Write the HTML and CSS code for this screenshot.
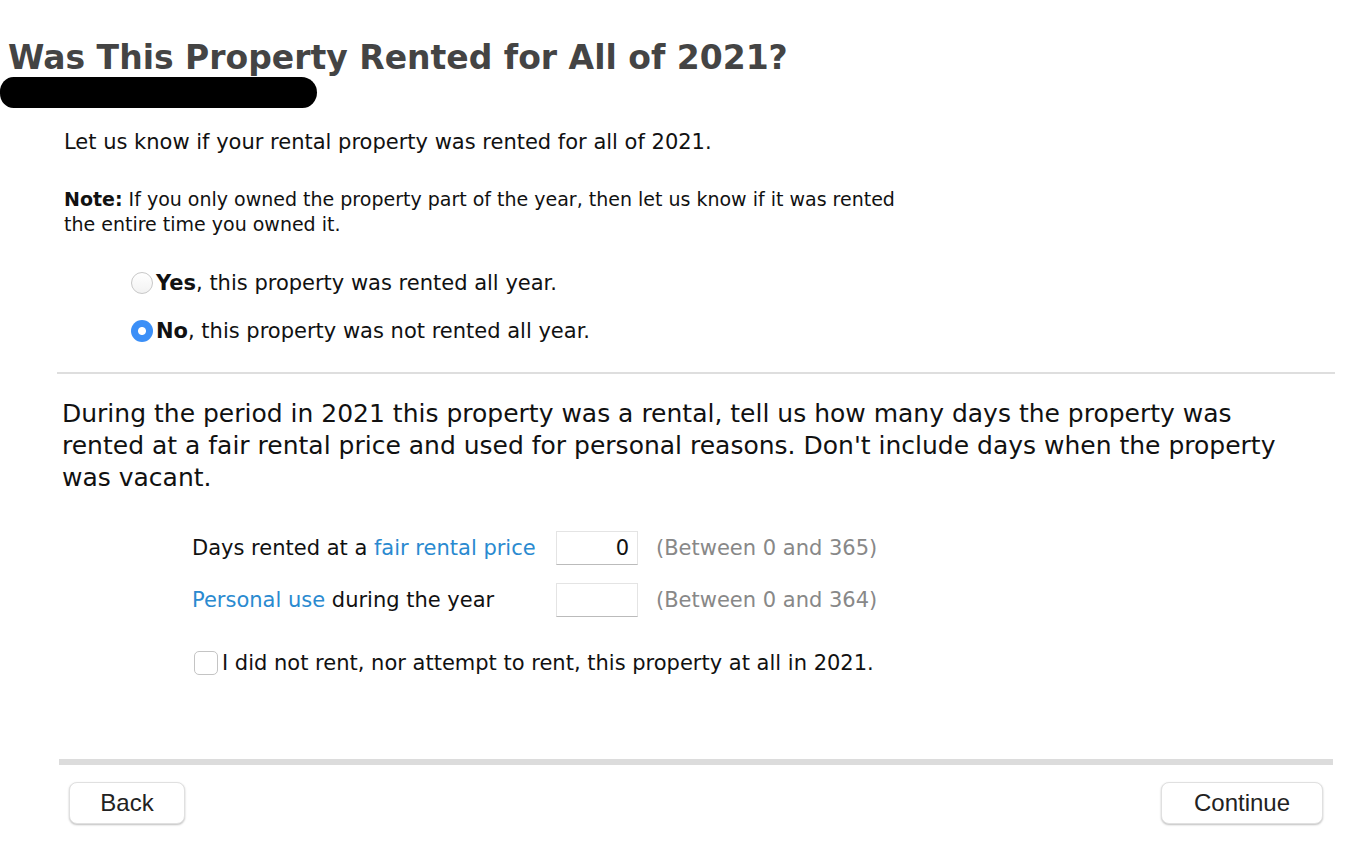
FILE: index.html
```html
<!DOCTYPE html>
<html>
<head>
<meta charset="utf-8">
<link rel="stylesheet" href="styles.css">
</head>
<body>
<div class="page">
  <header class="head">
    <h1 class="title">Was This Property Rented for All of 2021?</h1>
    <div class="redact"></div>
  </header>
  <section class="intro">
    <p class="lead">Let us know if your rental property was rented for all of 2021.</p>
    <p class="note"><b>Note:</b> If you only owned the property part of the year, then let us know if it was rented<br>the entire time you owned it.</p>
    <div class="radios">
      <label class="radio"><span class="rb"></span><span><b>Yes</b>, this property was rented all year.</span></label>
      <label class="radio"><span class="rb on"></span><span><b>No</b>, this property was not rented all year.</span></label>
    </div>
  </section>
  <hr class="sep">
  <p class="question">During the period in 2021 this property was a rental, tell us how many days the property was rented at a fair rental price and used for personal reasons. Don't include days when the property was vacant.</p>
  <div class="fields">
    <div class="row">
      <span class="lbl">Days rented at a <span class="link">fair rental price</span></span>
      <span class="inp">0</span>
      <span class="hint">(Between 0 and 365)</span>
    </div>
    <div class="row">
      <span class="lbl"><span class="link">Personal use</span> during the year</span>
      <span class="inp"></span>
      <span class="hint">(Between 0 and 364)</span>
    </div>
    <label class="check"><span class="cb"></span><span>I did not rent, nor attempt to rent, this property at all in 2021.</span></label>
  </div>
  <div class="bar"></div>
  <div class="buttons">
    <button class="btn back">Back</button>
    <button class="btn cont">Continue</button>
  </div>
</div>
</body>
</html>
```
FILE: styles.css
```css
html, body { margin: 0; padding: 0; background: #fff; }
body { font-family: "DejaVu Sans", "Noto Sans", sans-serif; color: #111; width: 1364px; height: 866px; overflow: hidden; }
.head { position: relative; height: 128px; }
.title { margin: 0; padding: 36px 0 0 8px; font-size: 33px; font-weight: bold; color: #444; line-height: 44px; }
.redact { position: absolute; left: 0; top: 77px; width: 317px; height: 31px; background: #000; border-radius: 14px 16px 15px 14px / 15px 16px 16px 15px; }
.intro { padding-left: 64px; }
.lead { margin: 0; font-size: 21px; line-height: 28px; }
.note { margin: 31px 0 0; font-size: 19px; line-height: 25px; }
.radios { padding: 32px 0 0 67px; display: flex; flex-direction: column; gap: 20px; }
.radio { display: flex; align-items: center; gap: 3px; font-size: 21px; line-height: 28px; }
.rb { width: 22px; height: 22px; box-sizing: border-box; border-radius: 50%; border: 1px solid #c8c8c8; background: linear-gradient(#fff, #f2f2f2); }
.rb.on { border: none; background: radial-gradient(circle, #fff 0 3.5px, #3b8ff7 4.5px); }
.sep { margin: 27px 29px 0 57px; border: 0; height: 2px; background: #dedede; }
.question { margin: 24px 60px 0 62px; font-size: 25px; line-height: 32px; }
.fields { padding: 37px 0 0 192px; }
.row { display: flex; align-items: center; height: 34px; margin-bottom: 18px; font-size: 21px; }
.lbl { width: 364px; }
.link { color: #2a8ad0; }
.inp { width: 82px; height: 34px; box-sizing: border-box; border: 1px solid #e4e4e4; border-bottom-color: #bbb; text-align: right; padding-right: 8px; line-height: 32px; font-size: 21px; }
.hint { margin-left: 18px; color: #888; }
.check { display: flex; align-items: center; gap: 4px; margin: 32px 0 0 2px; font-size: 21px; line-height: 28px; }
.cb { width: 24px; height: 24px; box-sizing: border-box; border: 1px solid #c4c4c4; border-radius: 5px; background: #fff; }
.bar { margin: 82px 31px 0 59px; height: 6px; background: #dcdcdc; }
.buttons { display: flex; justify-content: space-between; padding: 17px 41px 0 69px; }
.btn { font-family: "Liberation Sans", Arial, sans-serif; font-size: 24px; color: #222; background: #fff; border: 1px solid #e0e0e0; border-radius: 8px; box-shadow: 0 1px 2px rgba(0,0,0,0.25); height: 42px; padding: 0; }
.back { width: 116px; }
.cont { width: 162px; }
```
